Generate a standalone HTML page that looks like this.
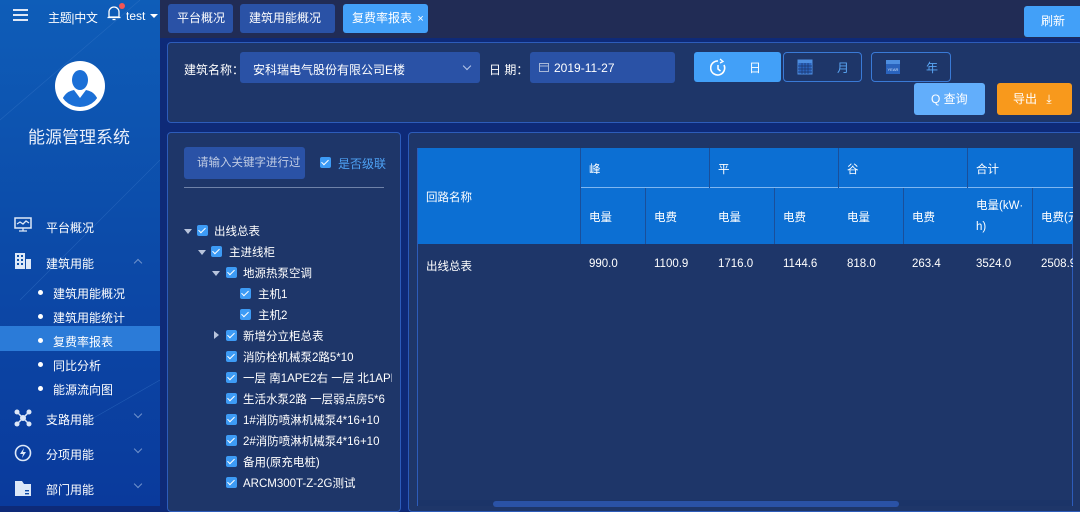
<!DOCTYPE html>
<html><head><meta charset="utf-8"><style>
*{margin:0;padding:0;box-sizing:border-box}
body{width:1080px;height:506px;overflow:hidden;background:#0e2a78;font-family:"Liberation Sans","Noto Sans CJK SC",sans-serif;font-size:12px;color:#fff;position:relative}
.a{position:absolute}
#side{left:0;top:0;width:160px;height:506px;background:linear-gradient(180deg,#0e5db8 0%,#0c4aa8 50%,#0a3a9c 100%)}
#top{left:160px;top:0;width:920px;height:38px;background:#212c55}
.tab{top:4px;height:29px;background:#2a52a6;border-radius:3px;line-height:29px;font-size:12px;padding-left:9px}
.panel{background:#1e3669;border:1px solid #2d5cba;border-radius:4px}
.mi{left:46px;font-size:12px}
.sub{left:53px;font-size:12px}
.dot{left:38px;width:5px;height:5px;border-radius:50%;background:#fff}
.cb{width:11px;height:11px;background:#3d9bf5;border-radius:2px}
.cb:after{content:"";position:absolute;left:3px;top:1px;width:3px;height:6px;border:solid #fff;border-width:0 1.5px 1.5px 0;transform:rotate(45deg)}
.tr{font-size:11.5px;color:#fff}
.tri{width:0;height:0;border-left:4px solid transparent;border-right:4px solid transparent;border-top:5px solid #b8c4dc}
.trr{width:0;height:0;border-top:4px solid transparent;border-bottom:4px solid transparent;border-left:5px solid #b8c4dc}
.th{background:#0c6fd3;color:#fff;font-size:11.5px}
.chev{width:6px;height:6px;border:solid #6f92cc;border-width:1px 1px 0 0}
</style></head><body>
<div id="side" class="a">
  <svg class="a" style="left:0;top:0" width="160" height="506"><g stroke="#3a78c8" stroke-width="0.6" opacity="0.5"><line x1="0" y1="120" x2="140" y2="0"/><line x1="20" y1="300" x2="160" y2="160"/><line x1="90" y1="420" x2="160" y2="380"/></g></svg>
  <div class="a" style="left:13px;top:9px;width:15px;height:1.5px;background:#dfe8f6;box-shadow:0 5px 0 #dfe8f6,0 10px 0 #dfe8f6"></div>
  <div class="a" style="left:48px;top:9px;font-size:12px;letter-spacing:-0.3px">主题|中文</div>
  <svg class="a" style="left:106px;top:5px" width="16" height="16"><path d="M3 12 L3 7 A5 5 0 0 1 13 7 L13 12 Z M1.5 12.5 H14.5 M6.5 14.5 H9.5" fill="none" stroke="#fff" stroke-width="1.3"/></svg>
  <div class="a" style="left:119px;top:3px;width:6px;height:6px;border-radius:50%;background:#f25656"></div>
  <div class="a" style="left:126px;top:9px;font-size:12px">test</div>
  <div class="a" style="left:150px;top:14px;border-left:4px solid transparent;border-right:4px solid transparent;border-top:4px solid #fff"></div>
  <svg class="a" style="left:54px;top:60px" width="52" height="52"><circle cx="26" cy="26" r="25" fill="#fff"/><clipPath id="c"><circle cx="26" cy="26" r="21"/></clipPath><g clip-path="url(#c)" fill="#1b6fd6"><ellipse cx="26" cy="20" rx="8" ry="10"/><path d="M6 48 Q8 32 20 30 L26 38 L32 30 Q44 32 46 48 Z"/></g></svg>
  <div class="a" style="left:28px;top:123px;font-size:17px;color:#e8eefa">能源管理系统</div>
  <svg class="a" style="left:14px;top:217px" width="18" height="16"><rect x="1" y="1" width="16" height="10" fill="none" stroke="#dde8f8" stroke-width="1.5"/><path d="M3 7 L6 5 L9 7 L12 4 L15 6 M5 14 H13 M9 11 V14" fill="none" stroke="#dde8f8" stroke-width="1.3"/></svg>
  <div class="a mi" style="top:219px">平台概况</div>
  <svg class="a" style="left:14px;top:252px" width="18" height="18"><rect x="1" y="1" width="10" height="16" fill="#dde8f8"/><rect x="12" y="7" width="5" height="10" fill="#dde8f8"/><g fill="#0c4fa8"><rect x="3" y="3" width="2" height="2"/><rect x="7" y="3" width="2" height="2"/><rect x="3" y="7" width="2" height="2"/><rect x="7" y="7" width="2" height="2"/><rect x="3" y="11" width="2" height="2"/><rect x="7" y="11" width="2" height="2"/></g></svg>
  <div class="a mi" style="top:255px">建筑用能</div>
  <div class="a chev" style="left:135px;top:260px;transform:rotate(-45deg)"></div>
  <div class="a dot" style="top:290px"></div><div class="a sub" style="top:285px">建筑用能概况</div>
  <div class="a dot" style="top:314px"></div><div class="a sub" style="top:309px">建筑用能统计</div>
  <div class="a" style="left:0;top:326px;width:160px;height:25px;background:#2b7bd8"></div>
  <div class="a dot" style="top:338px"></div><div class="a sub" style="top:333px">复费率报表</div>
  <div class="a dot" style="top:362px"></div><div class="a sub" style="top:357px">同比分析</div>
  <div class="a dot" style="top:386px"></div><div class="a sub" style="top:381px">能源流向图</div>
  <svg class="a" style="left:14px;top:409px" width="18" height="18"><g fill="#dde8f8"><circle cx="3" cy="3" r="2.5"/><circle cx="15" cy="3" r="2.5"/><circle cx="3" cy="15" r="2.5"/><circle cx="15" cy="15" r="2.5"/><circle cx="9" cy="9" r="3"/></g><path d="M3 3 L15 15 M15 3 L3 15" stroke="#dde8f8" stroke-width="1.5"/></svg>
  <div class="a mi" style="top:411px">支路用能</div>
  <div class="a chev" style="left:135px;top:411px;transform:rotate(135deg)"></div>
  <svg class="a" style="left:14px;top:444px" width="18" height="18"><circle cx="9" cy="9" r="7.5" fill="none" stroke="#dde8f8" stroke-width="1.6"/><path d="M10 4 L6 10 H9 L8 14 L12 8 H9 Z" fill="#dde8f8"/></svg>
  <div class="a mi" style="top:446px">分项用能</div>
  <div class="a chev" style="left:135px;top:446px;transform:rotate(135deg)"></div>
  <svg class="a" style="left:14px;top:479px" width="18" height="18"><path d="M1 2 H8 L10 5 H17 V17 H1 Z" fill="#dde8f8"/><rect x="11" y="11" width="4" height="1.4" fill="#0c4aa8"/><rect x="11" y="14" width="4" height="1.4" fill="#0c4aa8"/></svg>
  <div class="a mi" style="top:481px">部门用能</div>
  <div class="a chev" style="left:135px;top:481px;transform:rotate(135deg)"></div>
</div>
<div id="top" class="a"></div>
<div class="a tab" style="left:168px;width:65px">平台概况</div>
<div class="a tab" style="left:240px;width:95px">建筑用能概况</div>
<div class="a tab" style="left:343px;width:85px;background:#42a0f8">复费率报表 <span style="font-size:11px;margin-left:2px">×</span></div>
<div class="a" style="left:1024px;top:6px;width:60px;height:31px;background:#42a0f8;border-radius:3px;line-height:31px;padding-left:17px;font-size:12px">刷新</div>

<div class="a panel" style="left:167px;top:42px;width:916px;height:81px"></div>
<div class="a" style="left:184px;top:61px;font-size:12px">建筑名称：</div>
<div class="a" style="left:240px;top:52px;width:240px;height:31px;background:#2a52a6;border-radius:3px;padding:9px 0 0 13px;font-size:12px">安科瑞电气股份有限公司E楼</div>
<div class="a chev" style="left:464px;top:63px;transform:rotate(135deg);border-color:#b8c8e8"></div>
<div class="a" style="left:489px;top:61px;font-size:12px">日 期：</div>
<div class="a" style="left:530px;top:52px;width:145px;height:31px;background:#2a52a6;border-radius:3px;padding:9px 0 0 24px;font-size:12px">2019-11-27</div>
<svg class="a" style="left:539px;top:62px" width="10" height="10"><rect x="0.5" y="1.5" width="9" height="8" fill="none" stroke="#a8b8d8"/><line x1="0.5" y1="4" x2="9.5" y2="4" stroke="#a8b8d8"/></svg>
<div class="a" style="left:694px;top:52px;width:87px;height:30px;background:#42a0f8;border-radius:3px"></div>
<svg class="a" style="left:710px;top:58px" width="16" height="18"><path d="M8 3 A7 7 0 1 0 14 7" fill="none" stroke="#fff" stroke-width="1.6"/><path d="M8 7 V11 L10.5 13" fill="none" stroke="#fff" stroke-width="1.5"/><path d="M10 1 L13 3.5 L10 5" fill="none" stroke="#fff" stroke-width="1.3"/></svg>
<div class="a" style="left:749px;top:59px;font-size:12px">日</div>
<div class="a" style="left:783px;top:52px;width:79px;height:30px;border:1px solid #3a7ad6;border-radius:4px"></div>
<svg class="a" style="left:797px;top:58px" width="16" height="17"><rect x="1" y="2" width="14" height="14" fill="#2a63bd" stroke="#4d8ee0"/><rect x="1" y="2" width="14" height="3" fill="#4d8ee0"/><g stroke="#1e3669" stroke-width="0.7"><path d="M1 8 H15 M1 11 H15 M1 14 H15 M5 5 V16 M8 5 V16 M11 5 V16"/></g></svg>
<div class="a" style="left:837px;top:59px;font-size:12px;color:#5aa6f5">月</div>
<div class="a" style="left:871px;top:52px;width:80px;height:30px;border:1px solid #3a7ad6;border-radius:4px"></div>
<svg class="a" style="left:885px;top:58px" width="16" height="17"><rect x="1" y="2" width="14" height="14" fill="#2a63bd"/><rect x="1" y="2" width="14" height="4" fill="#4d8ee0"/><text x="2.5" y="13" font-size="4" fill="#cfe0f8" font-family="Liberation Sans">YEAR</text></svg>
<div class="a" style="left:926px;top:59px;font-size:12px;color:#5aa6f5">年</div>
<div class="a" style="left:914px;top:83px;width:71px;height:32px;background:#62aefb;border-radius:3px;line-height:32px;padding-left:17px;font-size:12px">Q 查询</div>
<div class="a" style="left:997px;top:83px;width:75px;height:32px;background:#f8991c;border-radius:3px;line-height:32px;padding-left:16px;font-size:12px">导出 <span style="margin-left:6px">⤓</span></div>

<div class="a panel" style="left:167px;top:132px;width:234px;height:380px"></div>
<div class="a" style="left:184px;top:147px;width:121px;height:32px;background:#2a52a6;border-radius:3px;line-height:32px;padding-left:13px;font-size:11.5px;color:#c0cce4;overflow:hidden;white-space:nowrap">请输入关键字进行过</div>
<div class="a cb" style="left:320px;top:157px"></div>
<div class="a" style="left:338px;top:155px;font-size:12px;color:#4ea2f5">是否级联</div>
<div class="a" style="left:184px;top:187px;width:200px;height:1px;background:#6f82a8"></div>

<div class="a tri" style="left:184px;top:229px"></div><div class="a cb" style="left:197px;top:225px"></div><div class="a tr" style="left:214px;top:223px">出线总表</div>
<div class="a tri" style="left:198px;top:250px"></div><div class="a cb" style="left:211px;top:246px"></div><div class="a tr" style="left:229px;top:244px">主进线柜</div>
<div class="a tri" style="left:212px;top:271px"></div><div class="a cb" style="left:226px;top:267px"></div><div class="a tr" style="left:243px;top:265px">地源热泵空调</div>
<div class="a cb" style="left:240px;top:288px"></div><div class="a tr" style="left:258px;top:286px">主机1</div>
<div class="a cb" style="left:240px;top:309px"></div><div class="a tr" style="left:258px;top:307px">主机2</div>
<div class="a trr" style="left:214px;top:331px"></div><div class="a cb" style="left:226px;top:330px"></div><div class="a tr" style="left:243px;top:328px">新增分立柜总表</div>
<div class="a cb" style="left:226px;top:351px"></div><div class="a tr" style="left:243px;top:349px">消防栓机械泵2路5*10</div>
<div class="a cb" style="left:226px;top:372px"></div><div class="a tr" style="left:243px;top:370px;width:149px;overflow:hidden;white-space:nowrap">一层 南1APE2右 一层 北1APE</div>
<div class="a cb" style="left:226px;top:393px"></div><div class="a tr" style="left:243px;top:391px">生活水泵2路 一层弱点房5*6</div>
<div class="a cb" style="left:226px;top:414px"></div><div class="a tr" style="left:243px;top:412px">1#消防喷淋机械泵4*16+10</div>
<div class="a cb" style="left:226px;top:435px"></div><div class="a tr" style="left:243px;top:433px">2#消防喷淋机械泵4*16+10</div>
<div class="a cb" style="left:226px;top:456px"></div><div class="a tr" style="left:243px;top:454px">备用(原充电桩)</div>
<div class="a cb" style="left:226px;top:477px"></div><div class="a tr" style="left:243px;top:475px">ARCM300T-Z-2G测试</div>

<div class="a panel" style="left:408px;top:132px;width:680px;height:380px"></div>
<div class="a" style="left:417px;top:148px;width:1px;height:358px;background:#2d5cba"></div>
<div class="a" style="left:1072px;top:148px;width:1px;height:358px;background:#2d5cba"></div>
<div class="a th" style="left:418px;top:148px;width:162px;height:96px;padding:41px 0 0 8px">回路名称</div>
<div class="a th" style="left:581px;top:148px;width:492px;height:39px"></div>
<div class="a" style="left:581px;top:187px;width:492px;height:1px;background:#7fb6f0"></div>
<div class="a" style="left:580px;top:148px;width:1px;height:96px;background:#1a4f9a"></div>
<div class="a" style="left:709px;top:148px;width:1px;height:96px;background:#1a4f9a"></div>
<div class="a" style="left:838px;top:148px;width:1px;height:96px;background:#1a4f9a"></div>
<div class="a" style="left:967px;top:148px;width:1px;height:96px;background:#1a4f9a"></div>
<div class="a" style="left:589px;top:161px;font-size:11.5px">峰</div>
<div class="a" style="left:718px;top:161px;font-size:11.5px">平</div>
<div class="a" style="left:847px;top:161px;font-size:11.5px">谷</div>
<div class="a" style="left:976px;top:161px;font-size:11.5px">合计</div>
<div class="a th" style="left:581px;top:188px;width:492px;height:56px"></div>
<div class="a" style="left:645px;top:188px;width:1px;height:56px;background:#1a4f9a"></div>
<div class="a" style="left:774px;top:188px;width:1px;height:56px;background:#1a4f9a"></div>
<div class="a" style="left:903px;top:188px;width:1px;height:56px;background:#1a4f9a"></div>
<div class="a" style="left:1032px;top:188px;width:1px;height:56px;background:#1a4f9a"></div>
<div class="a" style="left:589px;top:209px;font-size:11.5px">电量</div>
<div class="a" style="left:654px;top:209px;font-size:11.5px">电费</div>
<div class="a" style="left:718px;top:209px;font-size:11.5px">电量</div>
<div class="a" style="left:783px;top:209px;font-size:11.5px">电费</div>
<div class="a" style="left:847px;top:209px;font-size:11.5px">电量</div>
<div class="a" style="left:912px;top:209px;font-size:11.5px">电费</div>
<div class="a" style="left:976px;top:196px;font-size:11.5px;line-height:21px">电量(kW·<br>h)</div>
<div class="a" style="left:1041px;top:209px;font-size:11.5px;width:32px;overflow:hidden;white-space:nowrap">电费(元</div>
<div class="a" style="left:426px;top:258px;font-size:11.5px">出线总表</div>
<div class="a" style="left:589px;top:258px;font-size:11.5px">990.0</div>
<div class="a" style="left:654px;top:258px;font-size:11.5px">1100.9</div>
<div class="a" style="left:718px;top:258px;font-size:11.5px">1716.0</div>
<div class="a" style="left:783px;top:258px;font-size:11.5px">1144.6</div>
<div class="a" style="left:847px;top:258px;font-size:11.5px">818.0</div>
<div class="a" style="left:912px;top:258px;font-size:11.5px">263.4</div>
<div class="a" style="left:976px;top:258px;font-size:11.5px">3524.0</div>
<div class="a" style="left:1041px;top:258px;font-size:11.5px;width:32px;overflow:hidden;white-space:nowrap">2508.9</div>
<div class="a" style="left:418px;top:500px;width:654px;height:6px;background:#1b3468"></div>
<div class="a" style="left:493px;top:501px;width:406px;height:6px;background:#2a52a6;border-radius:3px"></div>
</body></html>
